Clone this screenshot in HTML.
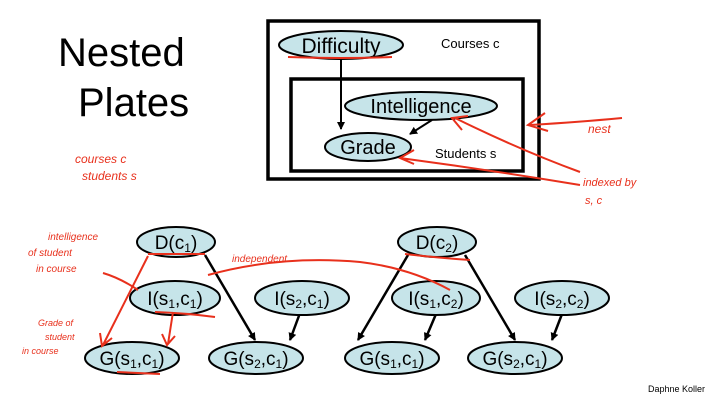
<!DOCTYPE html>
<html><head><meta charset="utf-8"><style>
html,body{margin:0;padding:0;background:#fff;}
svg{display:block;}
text{font-family:"Liberation Sans",sans-serif;}
</style></head><body>
<svg width="718" height="400" viewBox="0 0 718 400" xmlns="http://www.w3.org/2000/svg">
<defs>
<marker id="ah" markerWidth="8" markerHeight="8" refX="7" refY="4" orient="auto" markerUnits="userSpaceOnUse"><path d="M0,0 L8,4 L0,8 z" fill="#000"/></marker>
</defs>
<text x="58" y="66" font-size="40" fill="#000">Nested</text>
<text x="78" y="116" font-size="40" fill="#000">Plates</text>
<text x="75" y="163" font-size="12" fill="#e8301c" font-style="italic">courses   c</text>
<text x="82" y="180" font-size="12" fill="#e8301c" font-style="italic">students   s</text>

<rect x="268" y="21" width="271" height="158" fill="none" stroke="#000" stroke-width="3.5"/>
<rect x="291" y="79" width="232" height="92" fill="none" stroke="#000" stroke-width="3.5"/>
<g stroke="#000" stroke-width="2" fill="#c6e4e9">
<ellipse cx="341" cy="45" rx="62" ry="14"/>
<ellipse cx="421" cy="106" rx="76" ry="14"/>
<ellipse cx="368" cy="147" rx="43" ry="14"/>
</g>
<line x1="341" y1="59" x2="341" y2="129" stroke="#000" stroke-width="2" marker-end="url(#ah)"/>
<line x1="432" y1="120" x2="410" y2="134" stroke="#000" stroke-width="2" marker-end="url(#ah)"/>
<text x="341" y="53" font-size="21" text-anchor="middle">Difficulty</text>
<text x="421" y="113" font-size="20" text-anchor="middle">Intelligence</text>
<text x="368" y="154" font-size="20" text-anchor="middle">Grade</text>
<text x="441" y="48" font-size="13">Courses c</text>
<text x="435" y="158" font-size="13">Students s</text>

<text x="588" y="133" font-size="12" fill="#e8301c" font-style="italic">nest</text>
<text x="583" y="186" font-size="11" fill="#e8301c" font-style="italic">indexed by</text>
<text x="585" y="204" font-size="11" fill="#e8301c" font-style="italic">s, c</text>
<text x="48" y="240" font-size="10" fill="#e8301c" font-style="italic">intelligence</text>
<text x="28" y="256" font-size="10" fill="#e8301c" font-style="italic">of student</text>
<text x="36" y="272" font-size="10" fill="#e8301c" font-style="italic">in course</text>
<text x="232" y="262" font-size="10" fill="#e8301c" font-style="italic">independent</text>
<text x="38" y="326" font-size="9" fill="#e8301c" font-style="italic">Grade of</text>
<text x="45" y="340" font-size="9" fill="#e8301c" font-style="italic">student</text>
<text x="22" y="354" font-size="9" fill="#e8301c" font-style="italic">in course</text>

<g stroke="#000" stroke-width="2.5" marker-end="url(#ah)">
<line x1="205" y1="255" x2="255" y2="340"/>
<line x1="300" y1="313" x2="290" y2="340"/>
<line x1="408" y1="255" x2="358" y2="340"/>
<line x1="436" y1="314" x2="425" y2="340"/>
<line x1="465" y1="255" x2="515" y2="340"/>
<line x1="562" y1="314" x2="552" y2="340"/>
</g>
<g stroke="#000" stroke-width="2" fill="#c6e4e9">
<ellipse cx="176" cy="242" rx="39" ry="15"/>
<ellipse cx="175" cy="298" rx="45" ry="17"/>
<ellipse cx="302" cy="298" rx="47" ry="17"/>
<ellipse cx="132" cy="358" rx="47" ry="16"/>
<ellipse cx="256" cy="358" rx="47" ry="16"/>
<ellipse cx="437" cy="242" rx="39" ry="15"/>
<ellipse cx="436" cy="298" rx="44" ry="17"/>
<ellipse cx="562" cy="298" rx="47" ry="17"/>
<ellipse cx="392" cy="358" rx="47" ry="16"/>
<ellipse cx="515" cy="358" rx="47" ry="16"/>
</g>
<g font-size="19" text-anchor="middle" fill="#000">
<text x="176" y="249">D(c<tspan font-size="12" dy="3">1</tspan><tspan dy="-3">)</tspan></text>
<text x="437" y="249">D(c<tspan font-size="12" dy="3">2</tspan><tspan dy="-3">)</tspan></text>
<text x="175" y="305">I(s<tspan font-size="12" dy="3">1</tspan><tspan dy="-3">,c</tspan><tspan font-size="12" dy="3">1</tspan><tspan dy="-3">)</tspan></text>
<text x="302" y="305">I(s<tspan font-size="12" dy="3">2</tspan><tspan dy="-3">,c</tspan><tspan font-size="12" dy="3">1</tspan><tspan dy="-3">)</tspan></text>
<text x="436" y="305">I(s<tspan font-size="12" dy="3">1</tspan><tspan dy="-3">,c</tspan><tspan font-size="12" dy="3">2</tspan><tspan dy="-3">)</tspan></text>
<text x="562" y="305">I(s<tspan font-size="12" dy="3">2</tspan><tspan dy="-3">,c</tspan><tspan font-size="12" dy="3">2</tspan><tspan dy="-3">)</tspan></text>
<text x="132" y="365">G(s<tspan font-size="12" dy="3">1</tspan><tspan dy="-3">,c</tspan><tspan font-size="12" dy="3">1</tspan><tspan dy="-3">)</tspan></text>
<text x="256" y="365">G(s<tspan font-size="12" dy="3">2</tspan><tspan dy="-3">,c</tspan><tspan font-size="12" dy="3">1</tspan><tspan dy="-3">)</tspan></text>
<text x="392" y="365">G(s<tspan font-size="12" dy="3">1</tspan><tspan dy="-3">,c</tspan><tspan font-size="12" dy="3">1</tspan><tspan dy="-3">)</tspan></text>
<text x="515" y="365">G(s<tspan font-size="12" dy="3">2</tspan><tspan dy="-3">,c</tspan><tspan font-size="12" dy="3">1</tspan><tspan dy="-3">)</tspan></text>
</g>

<g stroke="#e8301c" stroke-width="2" fill="none">
<path d="M288,57 Q340,59 392,57"/>
<path d="M622,118 Q580,122 530,125 M545,113 L528,125 L548,131"/>
<path d="M580,172 Q520,150 455,118 M468,116 L452,118 L462,130"/>
<path d="M580,185 Q490,170 400,158 M414,150 L400,158 L414,164"/>
<path d="M148,256 L103,345 M100,333 L102,346 L112,338"/>
<path d="M173,312 L168,344 M162,334 L167,345 L175,336"/>
<path d="M208,275 Q280,255 360,262 Q410,268 450,290"/>
<path d="M155,312 Q185,313 215,317"/>
<path d="M117,372 L160,374"/>
<path d="M148,254 L205,254 M405,254 Q440,258 470,260"/>
<path d="M103,273 Q120,278 138,290"/>
</g>
<text x="648" y="392" font-size="9" fill="#000">Daphne Koller</text>
</svg>
</body></html>
